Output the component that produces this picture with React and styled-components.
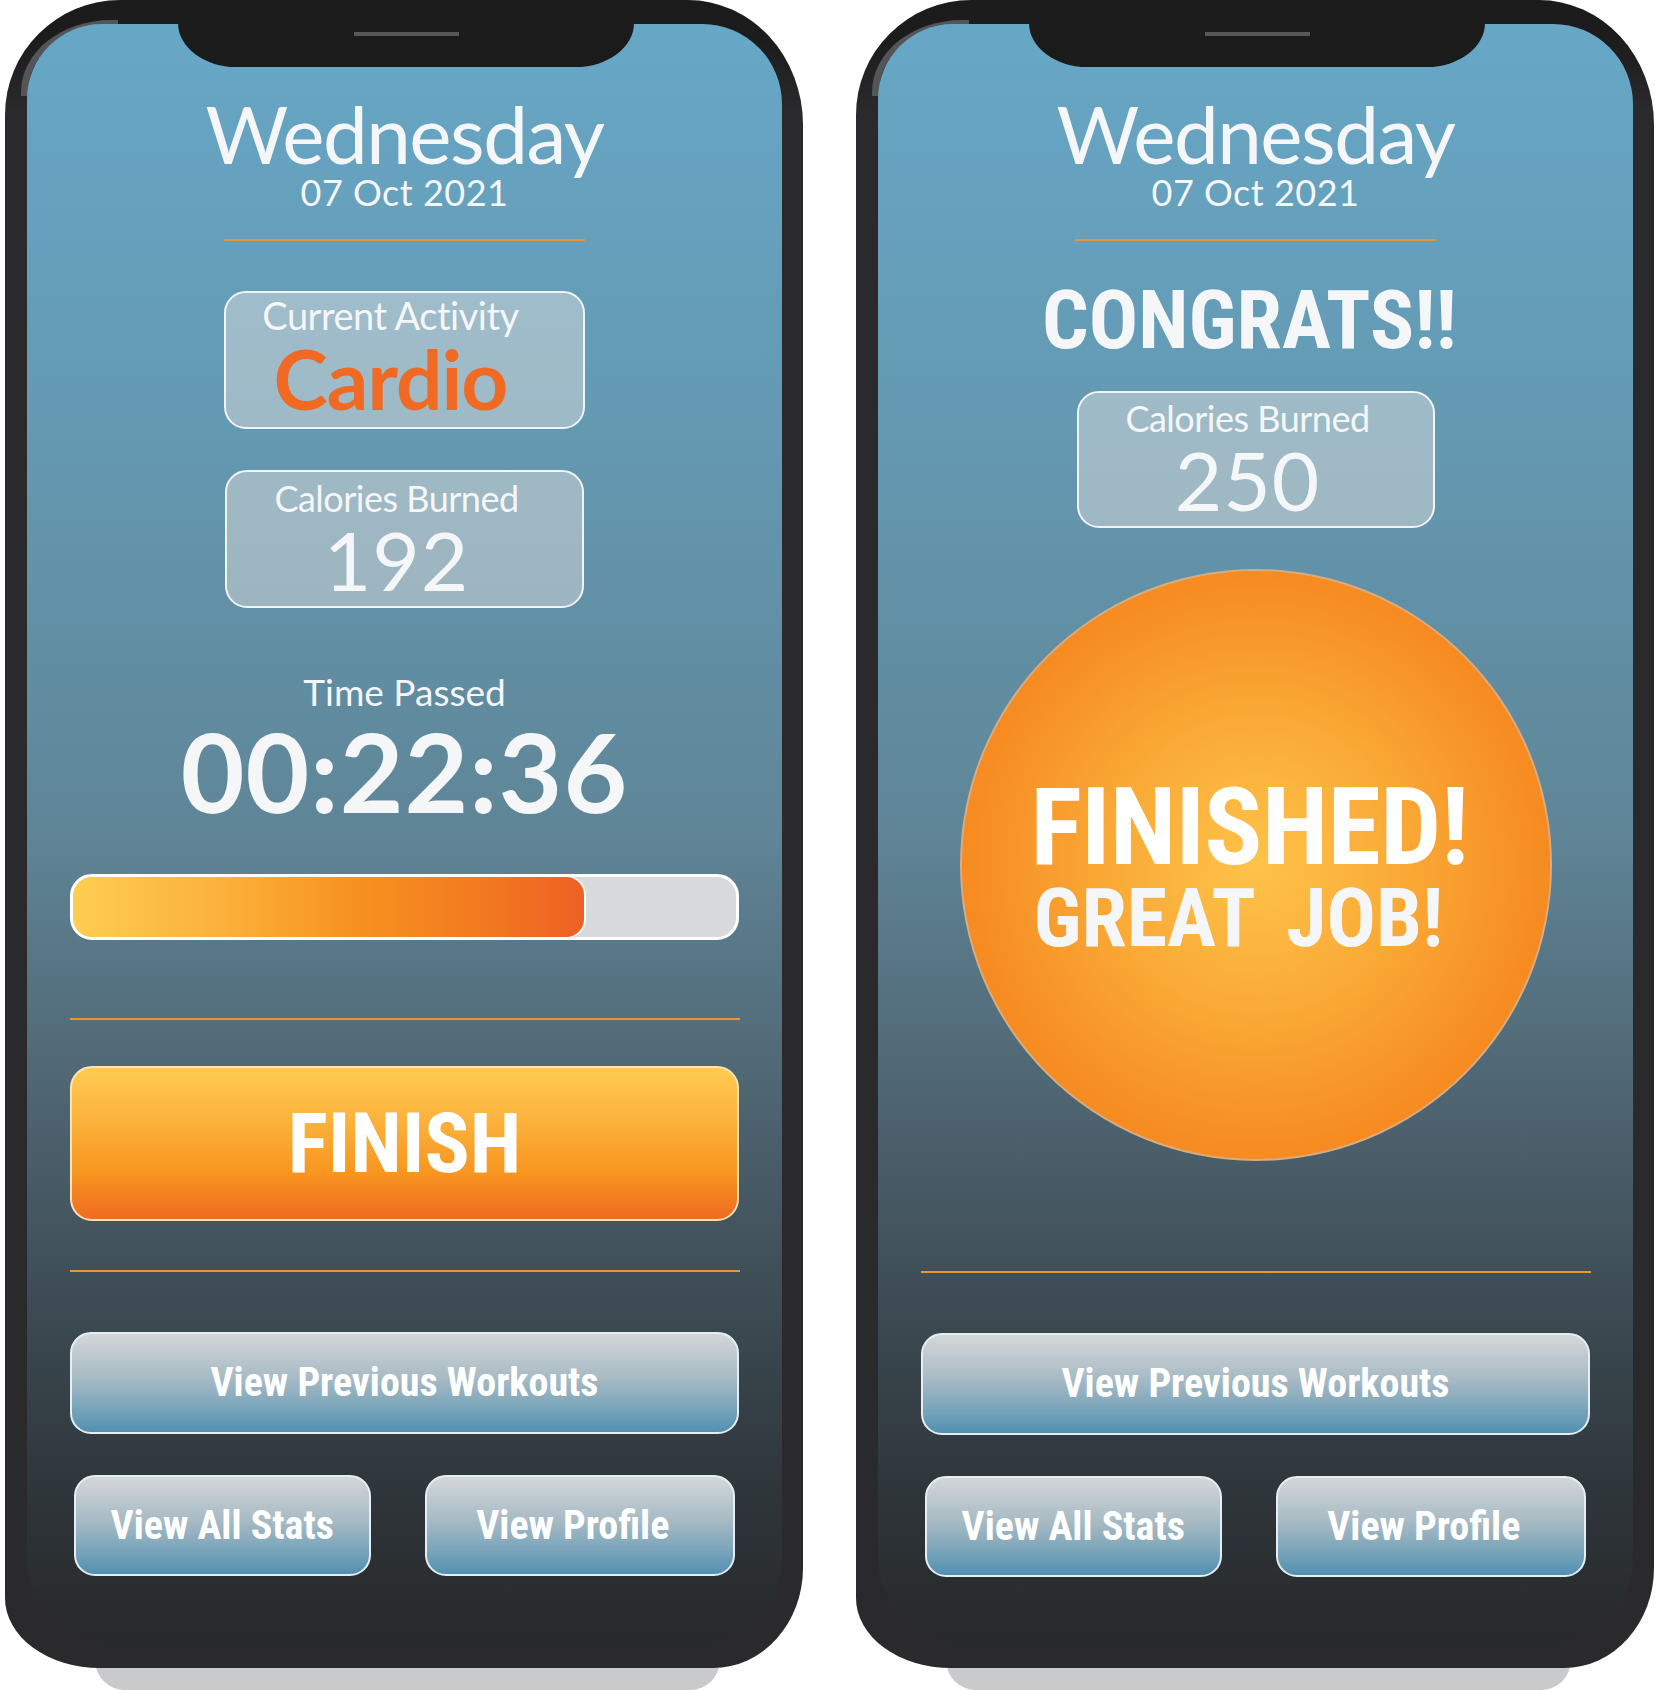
import React from "react";
import styled, { createGlobalStyle } from "styled-components";

const SANS = `Lato, "Open Sans", "Liberation Sans", sans-serif`;
const NARROW = `"Liberation Sans Narrow", "Arial Narrow", "Roboto Condensed", "DejaVu Sans Condensed", "Liberation Sans", sans-serif`;
const TEXT = "#f4f6f8";

const GlobalStyle = createGlobalStyle`
  html, body { margin: 0; padding: 0; background: #ffffff; }
  body { font-family: ${SANS}; }
  * { box-sizing: border-box; }
`;

const Page = styled.main`
  display: flex;
  gap: 53px;
  padding-left: 5px;
  width: 1660px;
  height: 1690px;
  overflow: hidden;
`;

const Phone = styled.div`
  position: relative;
  flex: none;
  width: 798px;
  height: 1668px;
`;

const Underside = styled.div`
  position: absolute;
  left: 90px;
  right: 83px;
  bottom: -22px;
  height: 60px;
  background: #c9cacc;
  border-radius: 0 0 30px 30px;
`;

const Frame = styled.div`
  position: relative;
  width: 100%;
  height: 100%;
  padding: 24px 21px 21px 22px;
  border-radius: 115px 115px 90px 95px / 115px 125px 100px 70px;
  background: linear-gradient(180deg, #1b1b1b 0px, #1c1c1d 40px, #2a2a2c 110px, #2a2a2c 100%);

  &::before {
    content: "";
    position: absolute;
    left: 16px;
    top: 20px;
    width: 90px;
    height: 72px;
    border-top: 4px solid #555558;
    border-left: 7px solid #555558;
    border-top-left-radius: 90px 72px;
  }
`;

const Notch = styled.div`
  position: absolute;
  z-index: 2;
  top: 0;
  left: 173px;
  width: 456px;
  height: 67px;
  background: #1b1b1b;
  border-radius: 0 0 58px 58px / 0 0 44px 44px;
  display: flex;
  justify-content: center;
  padding-top: 32px;
`;

const Speaker = styled.div`
  width: 105px;
  height: 4px;
  background: #58585b;
`;

const Screen = styled.div`
  position: relative;
  z-index: 1;
  width: 755px;
  height: 1623px;
  border-radius: 75px 80px 90px 90px;
  background: linear-gradient(
    180deg,
    #67a7c6 0%,
    #6499b2 25%,
    #5f8597 50%,
    #506774 65%,
    #3b4951 80%,
    #2d3337 92%,
    #27292b 100%
  );
  display: flex;
  flex-direction: column;
  align-items: center;
  padding-top: 73px;
  overflow: hidden;
`;

const DayTitle = styled.h1`
  margin: 0;
  font: 400 80px/0.9 ${SANS};
  letter-spacing: -1.5px;
  color: ${TEXT};
`;

const DateText = styled.div`
  margin-top: 5px;
  font: 400 36px/1 ${SANS};
  letter-spacing: 0.5px;
  color: ${TEXT};
`;

const Divider = styled.hr`
  margin: ${(p) => p.$mt}px 0 0;
  width: ${(p) => p.$w}px;
  height: 2px;
  border: 0;
  background: #ec952d;
  flex: none;
`;

const StatBox = styled.div`
  flex: none;
  width: ${(p) => p.$w}px;
  height: ${(p) => p.$h}px;
  margin-top: ${(p) => p.$mt}px;
  padding: ${(p) => p.$pt}px ${(p) => p.$pr}px 0 0;
  border: 2px solid #f1f4f6;
  border-radius: 22px;
  background: rgba(230, 226, 223, 0.45);
  display: flex;
  flex-direction: column;
  align-items: center;
`;

const BoxLabel = styled.div`
  font: 400 ${(p) => p.$fs}px/1 ${SANS};
  letter-spacing: -0.5px;
  color: ${TEXT};
`;

const ActivityName = styled.div`
  margin-top: 3px;
  font: 700 82px/1 ${SANS};
  letter-spacing: -1px;
  color: #f06a24;
`;

const BigNumber = styled.div`
  margin-top: 2px;
  font: 400 82px/1 ${SANS};
  letter-spacing: 1px;
  color: ${TEXT};
`;

const TimeLabel = styled.div`
  margin-top: 65px;
  font: 400 37px/1 ${SANS};
  color: ${TEXT};
`;

const Timer = styled.div`
  margin-top: 5px;
  font: 700 110px/1 ${SANS};
  letter-spacing: 1px;
  color: ${TEXT};
`;

const Track = styled.div`
  flex: none;
  margin-top: 49px;
  width: 669px;
  height: 66px;
  border: 3px solid #ffffff;
  border-radius: 22px;
  background: #d8d9da;
  overflow: hidden;
  display: flex;
`;

const Fill = styled.div`
  height: 100%;
  border-radius: 18px;
  box-shadow: 1px 0 0 1px #ffffff;
  background: linear-gradient(90deg, #fecd52 0%, #fbb03a 30%, #f7921f 55%, #f27a20 80%, #ee6024 100%);
`;

const FinishButton = styled.button`
  flex: none;
  margin-top: 46px;
  width: 669px;
  height: 155px;
  border: 2px solid #fde3b6;
  border-radius: 22px;
  background: linear-gradient(180deg, #ffcb51 0%, #fbb23c 35%, #f7951f 70%, #f06a22 100%);
  font: 700 84px/1 ${NARROW};
  color: #ffffff;
  display: flex;
  align-items: center;
  justify-content: center;
  padding: 0;
`;

const Congrats = styled.div`
  margin-top: 38px;
  font: 700 82px/1 ${NARROW};
  color: ${TEXT};
  margin-left: -12px;
`;

const Circle = styled.div`
  flex: none;
  margin-top: 41px;
  width: 592px;
  height: 592px;
  border-radius: 50%;
  border: 2px solid rgba(190, 200, 210, 0.55);
  background: radial-gradient(circle at 50% 50%, #fec34a 0%, #faaa36 35%, #f68b21 70%, #f27a20 100%);
  display: flex;
  flex-direction: column;
  align-items: center;
  padding-top: 208px;
`;

const CircleText = styled.div`
  margin-right: 12px;
  display: flex;
  flex-direction: column;
  align-items: flex-start;
`;

const Finished = styled.div`
  font: 700 108px/0.9 ${NARROW};
  color: #ffffff;
  letter-spacing: -0.5px;
`;

const GreatJob = styled.div`
  margin-top: 1px;
  margin-left: 3px;
  font: 700 82px/1 ${NARROW};
  word-spacing: 14px;
  color: ${TEXT};
`;

const NavButton = styled.button`
  flex: ${(p) => (p.$grow ? "1 1 0" : "none")};
  width: ${(p) => (p.$grow ? "auto" : "669px")};
  height: ${(p) => p.$h}px;
  margin-top: ${(p) => p.$mt || 0}px;
  padding: 0 ${(p) => p.$pr || 0}px 0 0;
  border: 2px solid #e4eef3;
  border-radius: 21px;
  background: linear-gradient(180deg, #d4d7d9 0%, #a7bac4 45%, #7aa5bb 75%, #5290b0 100%);
  font: 700 ${(p) => p.$fs}px/1 ${NARROW};
  color: #ffffff;
  display: flex;
  align-items: center;
  justify-content: center;
`;

const ButtonRow = styled.div`
  flex: none;
  margin-top: 41px;
  width: 669px;
  padding: 0 4px;
  display: flex;
  gap: 54px;
`;

function Device({ children }) {
  return (
    <Phone>
      <Underside />
      <Frame>
        <Notch>
          <Speaker />
        </Notch>
        <Screen>{children}</Screen>
      </Frame>
    </Phone>
  );
}

function Header() {
  return (
    <>
      <DayTitle>Wednesday</DayTitle>
      <DateText>07 Oct 2021</DateText>
      <Divider $w={361} $mt={29} />
    </>
  );
}

function Navigation() {
  return (
    <>
      <NavButton $h={102} $mt={60} $fs={40}>
        View Previous Workouts
      </NavButton>
      <ButtonRow>
        <NavButton $grow $h={101} $fs={40}>
          View All Stats
        </NavButton>
        <NavButton $grow $h={101} $fs={40} $pr={14}>
          View Profile
        </NavButton>
      </ButtonRow>
    </>
  );
}

export default function App() {
  const progress = 0.77;
  return (
    <>
      <GlobalStyle />
      <Page>
        <Device>
          <Header />
          <StatBox $w={361} $h={138} $mt={50} $pt={3} $pr={28}>
            <BoxLabel $fs={38}>Current Activity</BoxLabel>
            <ActivityName>Cardio</ActivityName>
          </StatBox>
          <StatBox $w={359} $h={138} $mt={41} $pt={8} $pr={16}>
            <BoxLabel $fs={36}>Calories Burned</BoxLabel>
            <BigNumber>192</BigNumber>
          </StatBox>
          <TimeLabel>Time Passed</TimeLabel>
          <Timer>00:22:36</Timer>
          <Track>
            <Fill style={{ width: `${progress * 100}%` }} />
          </Track>
          <Divider $w={670} $mt={78} />
          <FinishButton>FINISH</FinishButton>
          <Divider $w={670} $mt={49} />
          <Navigation />
        </Device>
        <Device>
          <Header />
          <Congrats>CONGRATS!!</Congrats>
          <StatBox $w={358} $h={137} $mt={30} $pt={7} $pr={16}>
            <BoxLabel $fs={36}>Calories Burned</BoxLabel>
            <BigNumber>250</BigNumber>
          </StatBox>
          <Circle>
            <CircleText>
              <Finished>FINISHED!</Finished>
              <GreatJob>GREAT JOB!</GreatJob>
            </CircleText>
          </Circle>
          <Divider $w={670} $mt={110} />
          <Navigation />
        </Device>
      </Page>
    </>
  );
}
